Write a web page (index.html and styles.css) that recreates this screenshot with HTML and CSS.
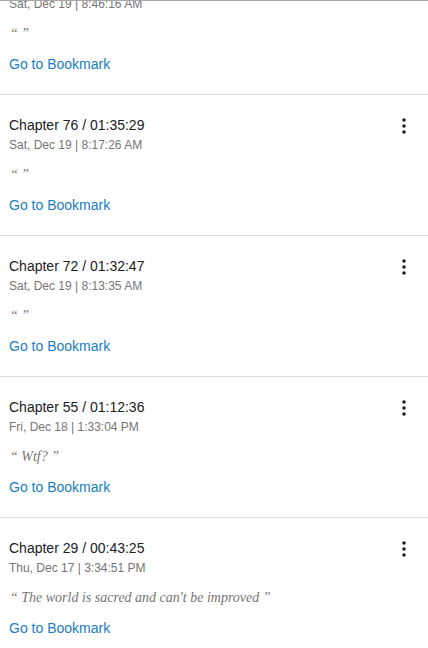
FILE: index.html
```html
<!DOCTYPE html>
<html>
<head>
<meta charset="utf-8">
<link rel="stylesheet" href="styles.css">
</head>
<body>
<div class="viewport">
  <div class="list">
    <div class="card">
      <div class="card-main">
        <div class="title">Chapter 80 / 01:38:02</div>
        <div class="date">Sat, Dec 19 | 8:46:16 AM</div>
        <div class="quote">“ ”</div>
        <a class="link" href="#">Go to Bookmark</a>
      </div>
      <svg class="more" viewBox="0 0 24 24"><circle cx="12" cy="6" r="1.8"/><circle cx="12" cy="12" r="1.8"/><circle cx="12" cy="18" r="1.8"/></svg>
    </div>
    <div class="card">
      <div class="card-main">
        <div class="title">Chapter 76 / 01:35:29</div>
        <div class="date">Sat, Dec 19 | 8:17:26 AM</div>
        <div class="quote">“ ”</div>
        <a class="link" href="#">Go to Bookmark</a>
      </div>
      <svg class="more" viewBox="0 0 24 24"><circle cx="12" cy="6" r="1.8"/><circle cx="12" cy="12" r="1.8"/><circle cx="12" cy="18" r="1.8"/></svg>
    </div>
    <div class="card">
      <div class="card-main">
        <div class="title">Chapter 72 / 01:32:47</div>
        <div class="date">Sat, Dec 19 | 8:13:35 AM</div>
        <div class="quote">“ ”</div>
        <a class="link" href="#">Go to Bookmark</a>
      </div>
      <svg class="more" viewBox="0 0 24 24"><circle cx="12" cy="6" r="1.8"/><circle cx="12" cy="12" r="1.8"/><circle cx="12" cy="18" r="1.8"/></svg>
    </div>
    <div class="card">
      <div class="card-main">
        <div class="title">Chapter 55 / 01:12:36</div>
        <div class="date">Fri, Dec 18 | 1:33:04 PM</div>
        <div class="quote">“ Wtf? ”</div>
        <a class="link" href="#">Go to Bookmark</a>
      </div>
      <svg class="more" viewBox="0 0 24 24"><circle cx="12" cy="6" r="1.8"/><circle cx="12" cy="12" r="1.8"/><circle cx="12" cy="18" r="1.8"/></svg>
    </div>
    <div class="card">
      <div class="card-main">
        <div class="title">Chapter 29 / 00:43:25</div>
        <div class="date">Thu, Dec 17 | 3:34:51 PM</div>
        <div class="quote">“ The world is sacred and can't be improved ”</div>
        <a class="link" href="#">Go to Bookmark</a>
      </div>
      <svg class="more" viewBox="0 0 24 24"><circle cx="12" cy="6" r="1.8"/><circle cx="12" cy="12" r="1.8"/><circle cx="12" cy="18" r="1.8"/></svg>
    </div>
  </div>
</div>
</body>
</html>
```
FILE: styles.css
```css
html, body {
  margin: 0;
  padding: 0;
  background: #fff;
}
body {
  font-family: "Liberation Sans", Arial, sans-serif;
  width: 428px;
  height: 648px;
  overflow: hidden;
}
.viewport {
  border-top: 1px solid #a8a8a8;
  height: 647px;
  overflow: hidden;
}
.list {
  margin-top: -48px;
  display: flex;
  flex-direction: column;
}
.card {
  border-top: 1px solid #dcdcdc;
  padding: 20px 12px 20px 9px;
  display: flex;
  align-items: flex-start;
}
.card-main {
  flex: 1;
  display: flex;
  flex-direction: column;
  align-items: flex-start;
}
.title {
  font-size: 14px;
  line-height: 20px;
  color: #212121;
}
.date {
  margin-top: 2px;
  font-size: 12px;
  line-height: 16px;
  color: #757575;
}
.quote {
  margin-top: 12px;
  font-family: "Liberation Serif", "Times New Roman", serif;
  font-style: italic;
  font-size: 14px;
  line-height: 20px;
  color: #757575;
  padding-left: 1px;
}
.link {
  margin-top: 10px;
  font-size: 14px;
  line-height: 20px;
  color: #1a7dc0;
  text-decoration: none;
}
.more {
  width: 24px;
  height: 24px;
  margin-top: -1px;
  fill: #212121;
  flex: none;
}
```
